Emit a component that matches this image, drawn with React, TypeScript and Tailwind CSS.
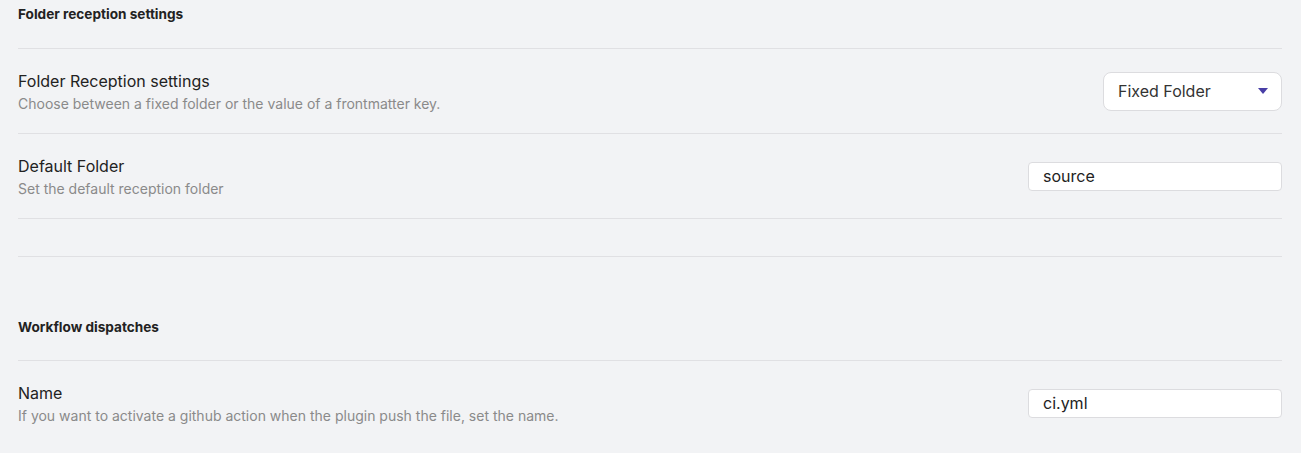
import React from "react";

function Row({ name, desc, control }: { name: string; desc: string; control: React.ReactNode }) {
  return (
    <div className="flex h-[85px] items-center justify-between border-t border-[#e0e0e3]">
      <div className="flex flex-col">
        <div className="text-[16px] leading-[24px] text-[#222222]">{name}</div>
        <div className="text-[14px] leading-[21px] text-[#8a8a8a]">{desc}</div>
      </div>
      {control}
    </div>
  );
}

function TextInput({ value }: { value: string }) {
  return (
    <div className="flex h-[29px] w-[254px] items-center rounded-[4px] border border-[#dcdcdf] bg-white pl-[14px] text-[16px] text-[#222222]">
      {value}
    </div>
  );
}

export default function App() {
  return (
    <div
      className="min-h-[453px] w-full bg-[#f2f3f5] pl-[18px] pr-[19px]"
      style={{ fontFamily: "Inter, 'Noto Sans', sans-serif" }}
    >
      <div className="flex h-[48px] items-start pt-[4px]">
        <div className="text-[13.6px] font-bold leading-[20px] text-[#222222]">Folder reception settings</div>
      </div>
      <Row
        name="Folder Reception settings"
        desc="Choose between a fixed folder or the value of a frontmatter key."
        control={
          <div className="flex h-[39px] w-[179px] items-center justify-between rounded-[8px] border border-[#dcdcdf] bg-white pl-[14px] pr-[13px] text-[16px] text-[#333333]">
            <span>Fixed Folder</span>
            <svg width="10" height="6" viewBox="0 0 10 6">
              <path d="M0 0 H10 L5 6 Z" fill="#483ea6" />
            </svg>
          </div>
        }
      />
      <Row name="Default Folder" desc="Set the default reception folder" control={<TextInput value="source" />} />
      <div className="h-[38px] border-t border-[#e0e0e3]" />
      <div className="flex h-[104px] items-start border-t border-[#e0e0e3] pt-[60px]">
        <div className="text-[13.6px] font-bold leading-[20px] text-[#222222]">Workflow dispatches</div>
      </div>
      <Row
        name="Name"
        desc="If you want to activate a github action when the plugin push the file, set the name."
        control={<TextInput value="ci.yml" />}
      />
    </div>
  );
}
